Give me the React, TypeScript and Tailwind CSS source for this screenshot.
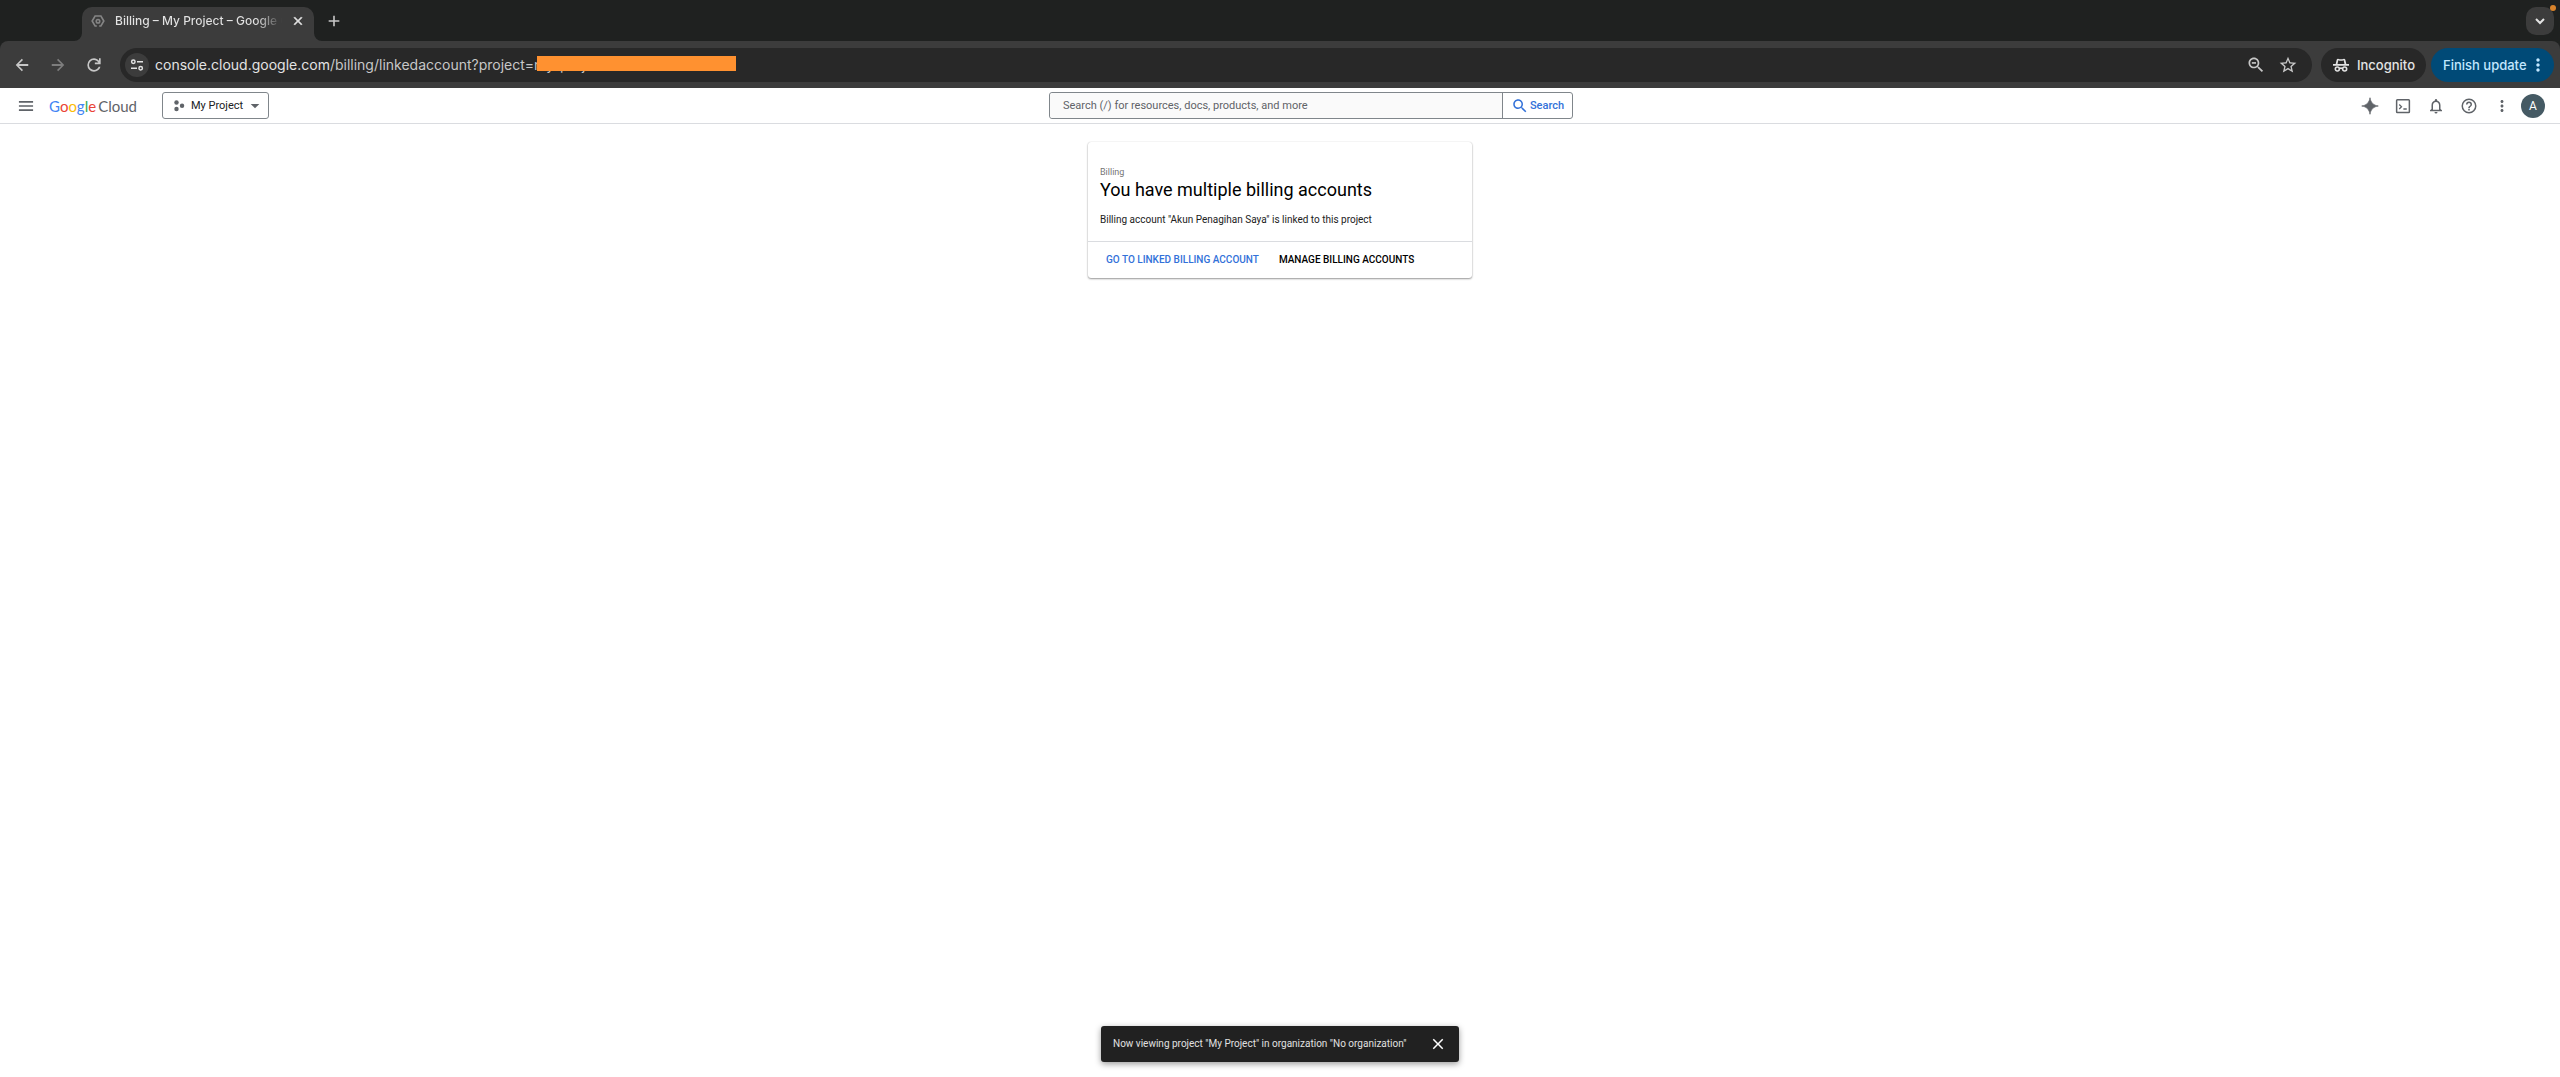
import type { ReactNode } from 'react'

type IconProps = { size?: string; children: ReactNode; box?: string; className?: string }

function Icon({ size = 'size-5', children, box = '0 0 24 24', className = '' }: IconProps) {
  return (
    <svg viewBox={box} fill="currentColor" aria-hidden="true" className={`${size} shrink-0 ${className}`}>
      {children}
    </svg>
  )
}

const CLOSE = 'M19 6.41 17.59 5 12 10.59 6.41 5 5 6.41 10.59 12 5 17.59 6.41 19 12 13.41 17.59 19 19 17.59 13.41 12z'
const DOTS = 'M12 8c1.1 0 2-.9 2-2s-.9-2-2-2-2 .9-2 2 .9 2 2 2zm0 2c-1.1 0-2 .9-2 2s.9 2 2 2 2-.9 2-2-.9-2-2-2zm0 6c-1.1 0-2 .9-2 2s.9 2 2 2 2-.9 2-2-.9-2-2-2z'
const MAGNIFIER = 'M15.5 14h-.79l-.28-.27C15.41 12.59 16 11.11 16 9.5 16 5.91 13.09 3 9.5 3S3 5.91 3 9.5 5.91 16 9.5 16c1.61 0 3.09-.59 4.23-1.57l.27.28v.79l5 4.99L20.49 19l-4.99-5zm-6 0C7.01 14 5 11.99 5 9.5S7.01 5 9.5 5 14 7.01 14 9.5 11.99 14 9.5 14z'

function TabStrip() {
  return (
    <div className="flex h-[41px] items-end bg-[#1f2120] pl-[74px]">
      <Icon size="size-2" box="0 0 8 8" className="text-[#3c3c3c]">
        <path d="M8 0v8H0a8 8 0 0 0 8-8z" />
      </Icon>
      <div className="flex h-[34px] w-[232px] items-center rounded-t-[10px] bg-[#3c3c3c] pr-2 pb-1.5 pl-[9px]">
        <Icon size="size-3.5" className="mr-2.5 text-[#858585]">
          <g fill="none" stroke="currentColor" strokeWidth="2.8">
            <path d="M10 3.5H7L2 12l5 8.500h3M14 3.500h3l5 8.500-5 8.500h-3M8 3.500h8" />
            <circle cx="12" cy="12.500" r="3" />
          </g>
        </Icon>
        <span className="min-w-0 flex-1 overflow-hidden bg-linear-to-r from-[#e3e3e3] from-85% to-[#3c3c3c] bg-clip-text text-xs leading-5 font-medium whitespace-nowrap text-transparent">
          Billing – My Project – Google Cloud
        </span>
        <button aria-label="Close tab" className="ml-2 grid size-4 place-items-center text-[#e3e3e3]">
          <Icon size="size-3.5"><path stroke="currentColor" d={CLOSE} /></Icon>
        </button>
      </div>
      <Icon size="size-2" box="0 0 8 8" className="text-[#3c3c3c]">
        <path d="M0 0v8h8a8 8 0 0 1-8-8z" />
      </Icon>
      <button aria-label="New tab" className="mb-3 ml-1 grid size-4 place-items-center text-[#c7c7c7]">
        <Icon size="size-4"><path d="M13.200 4h-2.400v6.800H4v2.400h6.800V20h2.400v-6.800H20v-2.400h-6.800z" /></Icon>
      </button>
      <button aria-label="Search tabs" className="relative mr-1.5 mb-1.5 ml-auto grid size-7 place-items-center rounded-[10px] bg-[#3c3c3c] text-[#e3e3e3]">
        <Icon size="size-4"><path fill="none" stroke="currentColor" strokeWidth="3" d="m6 9 6 6 6-6" /></Icon>
        <span className="absolute -top-0.5 -right-0.5 size-1.5 rounded-full bg-[#d9832b]" />
      </button>
    </div>
  )
}

function Toolbar() {
  return (
    <div className="bg-[#1f2120]">
      <div className="flex h-[47px] items-center rounded-t-lg bg-[#3c3c3c] pr-1.5 pl-3">
        <div className="flex gap-4 text-[#c7c7c7]">
          <button aria-label="Back"><Icon><path d="M19.500 10.900H8.300l4.900-4.900L11.800 4.600 4.500 12l7.300 7.400 1.400-1.400-4.900-4.900h11.200z" /></Icon></button>
          <button aria-label="Forward" className="text-[#7d7d7d]"><Icon><path d="M4.500 10.900h11.200L10.800 6l1.400-1.400 7.300 7.400-7.300 7.400-1.400-1.400 4.900-4.900H4.500z" /></Icon></button>
          <button aria-label="Reload">
            <Icon><path d="M12 20q-3.350 0-5.675-2.325T4 12q0-3.350 2.325-5.675T12 4q1.725 0 3.300.7125T18 6.750V4h2v7h-7V9h4.200q-.8-1.400-2.1875-2.200T12 6Q9.500 6 7.750 7.750T6 12q0 2.500 1.750 4.250T12 18q1.925 0 3.475-1.100T17.650 14h2.100q-.7 2.650-2.850 4.325T12 20z" /></Icon>
          </button>
        </div>
        <div className="ml-4 flex h-[34px] flex-1 items-center rounded-full bg-[#282828] pr-3.5 pl-[5px]">
          <button aria-label="Site information" className="grid size-6 place-items-center rounded-full bg-[#3c3c3c] text-[#e3e3e3]">
            <Icon size="size-4">
              <g fill="none" stroke="currentColor" strokeWidth="2.200">
                <circle cx="6.500" cy="7" r="2.600" /><path d="M12 7h9M3 17h9" /><circle cx="17.500" cy="17" r="2.600" />
              </g>
            </Icon>
          </button>
          <p className="relative ml-1.5 text-sm leading-5 whitespace-nowrap text-[#c7c7c7]">
            <span className="text-[#e3e3e3]">console.cloud.google.com</span>/billing/linkedaccount?project=my-project
            <span className="absolute top-px left-[382px] h-[15px] w-[199px] bg-[#ff9130]" />
          </p>
          <div className="ml-auto flex gap-3 text-[#c7c7c7]">
            <button aria-label="Zoom out">
              <Icon><path d={MAGNIFIER} /><path d="M7 8.500h5v2H7z" /></Icon>
            </button>
            <button aria-label="Bookmark this tab">
              <Icon><path d="m22 9.240-7.190-.620L12 2 9.190 8.630 2 9.240l5.460 4.730L5.820 21 12 17.270 18.180 21l-1.630-7.030zM12 15.400l-3.760 2.270 1-4.280-3.320-2.880 4.380-.380L12 6.100l1.710 4.040 4.380.380-3.320 2.880 1 4.280z" /></Icon>
            </button>
          </div>
        </div>
        <button className="ml-[9px] flex h-[34px] w-[105px] items-center gap-2 rounded-full bg-[#282828] pl-3 text-[13px] leading-5 font-medium text-[#e3e3e3]">
          <Icon size="size-4">
            <path d="M7.500 2.500 10 3.300h4l2.500-.8q1.500 0 2 1.500l1.500 6.500H24V13H0v-2.500h4L5.500 4q.5-1.500 2-1.500zM8 5 6.800 10.500h10.400L16 5l-2 .7h-4z" />
            <g fill="none" stroke="currentColor" strokeWidth="2.400"><circle cx="6.500" cy="18" r="3" /><circle cx="17.500" cy="18" r="3" /><path d="M9.500 17.500q2.500-1.500 5 0" /></g>
          </Icon>
          Incognito
        </button>
        <button className="ml-[5px] flex h-[34px] w-[123px] items-center justify-between rounded-full bg-[#004a77] pr-1.5 pl-3 text-[13px] leading-5 font-medium text-[#c2e7ff]">
          Finish update
          <Icon><path d={DOTS} /></Icon>
        </button>
      </div>
    </div>
  )
}

function Logo() {
  return (
    <a href="#home" aria-label="Google Cloud" className="flex w-[87px] gap-0.5 font-[Lato] text-[15px] leading-5 whitespace-nowrap text-[#5f6368]">
      <span>
        <span className="text-[#4285f4]">G</span><span className="text-[#ea4335]">o</span><span className="text-[#fbbc04]">o</span><span className="text-[#4285f4]">g</span><span className="text-[#34a853]">l</span><span className="text-[#ea4335]">e</span>
      </span>
      <span>Cloud</span>
    </a>
  )
}

function ConsoleHeader() {
  return (
    <header className="grid h-9 grid-cols-[1049fr_524px_987fr] items-center border-b border-[#dadce0] bg-white">
      <div className="flex items-center">
        <button aria-label="Navigation menu" className="ml-4 text-[#5f6368]">
          <Icon><path d="M3.500 18h17v-2h-17zm0-5h17v-2h-17zm0-7v2h17V6z" /></Icon>
        </button>
        <div className="ml-[13px]"><Logo /></div>
        <button className="ml-[26px] flex h-[27px] w-[107px] items-center gap-1 rounded-[3px] border border-[#80868b] pl-2.5 text-[11px] leading-4 whitespace-nowrap text-[#202124]">
          <Icon size="size-3.5" className="text-[#5f6368]"><circle cx="6" cy="6" r="3.800" /><circle cx="6" cy="17" r="3.800" /><circle cx="15.500" cy="11.500" r="3.800" /></Icon>
          My Project
          <Icon size="size-4" className="text-[#5f6368]"><path d="m5.500 9 6.500 6.500L18.500 9z" /></Icon>
        </button>
      </div>
      <form className="flex h-[27px] rounded-[3px] border border-[#80868b]">
        <input aria-label="Search" placeholder="Search (/) for resources, docs, products, and more" className="min-w-0 flex-1 rounded-l-[3px] bg-[#fafafa] px-[13px] text-[11px] leading-4 outline-none placeholder:text-[#5f6368]" />
        <button type="button" className="flex w-[70px] items-center justify-center gap-px border-l border-[#80868b] text-[11px] leading-4 font-medium text-[#3271d9]">
          <Icon size="size-[18px]"><path d={MAGNIFIER} /></Icon>
          Search
        </button>
      </form>
      <div className="flex items-center justify-end gap-2.5 pr-[15px] text-[#5f6368]">
        <div className="flex gap-[15px]">
          <button aria-label="Gemini"><Icon size="size-[18px]"><path d="M12 1C12.600 7 17 11.400 23 12 17 12.600 12.600 17 12 23 11.400 17 7 12.600 1 12 7 11.400 11.400 7 12 1z" stroke="currentColor" /></Icon></button>
          <button aria-label="Cloud Shell"><Icon size="size-[18px]"><g fill="none" stroke="currentColor" strokeWidth="2"><rect x="3.500" y="3.500" width="17" height="17" rx="1" /><path strokeWidth="1.700" d="m7 10 3 3-3 3M12.500 16H17" /></g></Icon></button>
          <button aria-label="Notifications"><Icon size="size-[18px]"><path d="M12 22a2 2 0 0 0 2-2h-4a2 2 0 0 0 2 2zm6-6v-5c0-3.070-1.630-5.640-4.500-6.320V4a1.500 1.500 0 0 0-3 0v.680C7.640 5.360 6 7.920 6 11v5l-2 1.500V19h16v-1.500zm-2 1H8v-6c0-2.480 1.510-4.500 4-4.500s4 2.020 4 4.500z" /></Icon></button>
          <button aria-label="Help"><Icon size="size-[18px]"><path d="M11 18h2v-2h-2zm1-16a10 10 0 1 0 0 20 10 10 0 0 0 0-20zm0 18a8 8 0 1 1 0-16 8 8 0 0 1 0 16zm0-14a4 4 0 0 0-4 4h2a2 2 0 1 1 4 0c0 2-3 1.750-3 5h2c0-2.250 3-2.500 3-5a4 4 0 0 0-4-4z" /></Icon></button>
          <button aria-label="More options"><Icon size="size-[18px]"><path d={DOTS} /></Icon></button>
        </div>
        <button aria-label="Account" className="grid size-6 place-items-center rounded-full bg-[#455a64] text-xs leading-4 text-white">A</button>
      </div>
    </header>
  )
}

function BillingCard() {
  return (
    <section className="mx-auto mt-[18px] w-full max-w-96 rounded-[3px] bg-white shadow-[0_1px_2px_rgba(0,0,0,0.4),0_0_1px_rgba(0,0,0,0.2)]">
      <div className="border-b border-[#dadce0] px-3 pt-6 pb-[13px]">
        <p className="text-[9px] leading-3 text-[#757575]">Billing</p>
        <h1 className="text-lg leading-6 text-black">You have multiple billing accounts</h1>
        <p className="mt-2.5 text-[10px] leading-4 text-[#212121]">Billing account "Akun Penagihan Saya" is linked to this project</p>
      </div>
      <div className="flex h-9 items-center gap-5 px-[18px] text-[10px] leading-4 font-medium">
        <button className="text-[#3271d9]">GO TO LINKED BILLING ACCOUNT</button>
        <button className="text-black">MANAGE BILLING ACCOUNTS</button>
      </div>
    </section>
  )
}

export default function App() {
  return (
    <div className="flex min-h-screen flex-col bg-white font-[Roboto]">
      <div className="font-[Inter]">
        <TabStrip />
        <Toolbar />
      </div>
      <ConsoleHeader />
      <main className="flex-1">
        <BillingCard />
      </main>
      <div role="status" className="mx-auto mb-[15px] flex h-9 w-[358px] items-center justify-between rounded-[3px] bg-[#212121] pr-3 pl-3 text-[10px] leading-4 text-[#e0e0e0] shadow-[0_2px_6px_rgba(0,0,0,0.4)]">
        Now viewing project "My Project" in organization "No organization"
        <button aria-label="Dismiss" className="text-white"><Icon size="size-[18px]"><path d={CLOSE} /></Icon></button>
      </div>
    </div>
  )
}
